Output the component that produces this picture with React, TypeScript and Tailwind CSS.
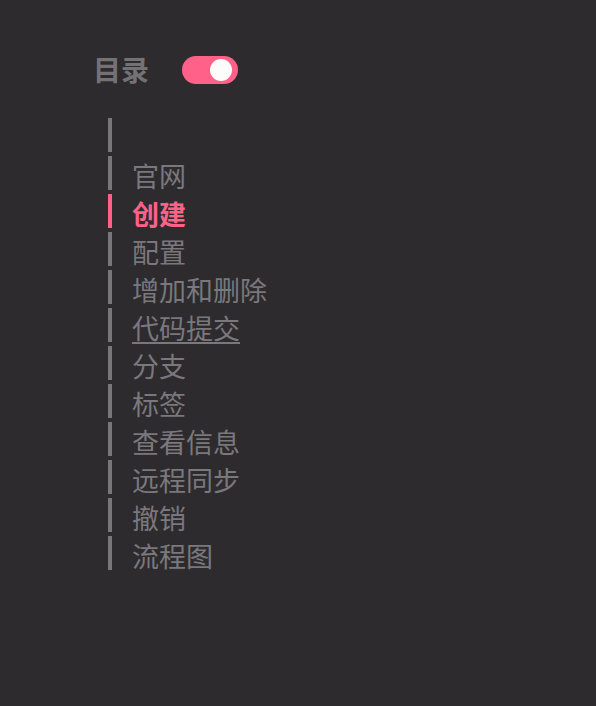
import { useState } from "react";

const items = [
  "",
  "官网",
  "创建",
  "配置",
  "增加和删除",
  "代码提交",
  "分支",
  "标签",
  "查看信息",
  "远程同步",
  "撤销",
  "流程图",
];

export default function App() {
  const [on, setOn] = useState(true);
  const active = 2;

  return (
    <div
      className="min-h-[706px] w-full bg-[#2d2b2e] pl-[93px] pt-[52px]"
      style={{ fontFamily: '"Noto Sans CJK SC", "Noto Sans", sans-serif' }}
    >
      <div className="flex h-[36px] items-center gap-[33px]">
        <h2 className="-mt-[3px] text-[28px] font-bold leading-[36px] text-[#747275]">目录</h2>
        <button
          onClick={() => setOn(!on)}
          className={`flex h-[28px] w-[56px] items-center rounded-full px-[3px] ${
            on ? "justify-end bg-[#ff6188]" : "justify-start bg-[#555356]"
          }`}
        >
          <span className="mr-[3px] block h-[22px] w-[22px] rounded-full bg-[#fcfcfa]" />
        </button>
      </div>

      <ul className="ml-[15px] mt-[30px] flex flex-col gap-[4px]">
        {items.map((t, i) => (
          <li
            key={i}
            className={`h-[34px] border-l-4 pl-[20px] ${
              i === active ? "border-[#ff6188]" : "border-[#78767a]"
            }`}
          >
            {t && (
              <a
                className={`block text-[27px] leading-[40px] ${
                  i === active
                    ? "font-bold text-[#ff6188]"
                    : i === 5
                    ? "text-[#7a787c] underline decoration-[2px] underline-offset-[3px]"
                    : "text-[#7a787c]"
                }`}
              >
                {t}
              </a>
            )}
          </li>
        ))}
      </ul>
    </div>
  );
}
